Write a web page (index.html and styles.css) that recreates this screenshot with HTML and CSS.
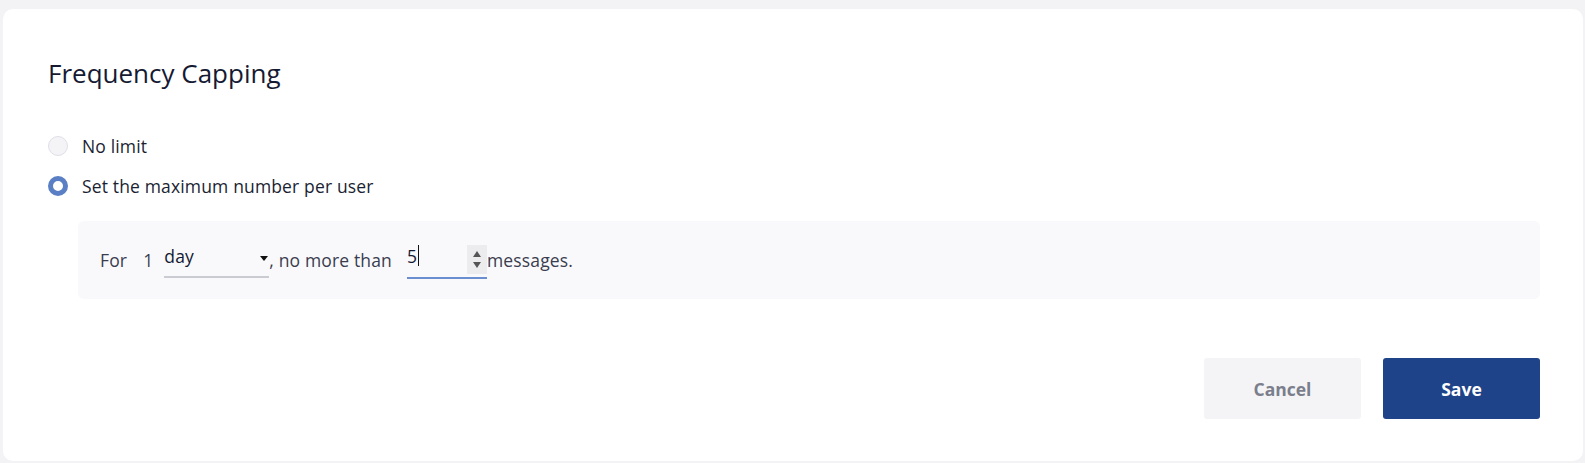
FILE: index.html
```html
<!DOCTYPE html>
<html>
<head>
<meta charset="utf-8">
<link rel="stylesheet" href="styles.css">
</head>
<body>
<div class="card">
  <h2 class="title">Frequency Capping</h2>
  <div class="options">
    <label class="option">
      <span class="radio"></span>
      <span class="opt-text">No limit</span>
    </label>
    <label class="option">
      <span class="radio checked"></span>
      <span class="opt-text">Set the maximum number per user</span>
    </label>
  </div>
  <div class="rule-box">
    <span class="word">For</span>
    <span class="num">1</span>
    <span class="select">
      <span class="select-val">day</span>
      <span class="caret"></span>
    </span>
    <span class="word">, no more than</span>
    <span class="number-input">
      <span class="input-val">5<span class="cursor"></span></span>
      <span class="spinner"><span class="up"></span><span class="down"></span></span>
    </span>
    <span class="word tail">messages.</span>
  </div>
  <div class="actions">
    <button class="btn cancel">Cancel</button>
    <button class="btn save">Save</button>
  </div>
</div>
</body>
</html>
```
FILE: styles.css
```css
html, body {
  margin: 0;
  padding: 0;
}
body {
  background: #f3f3f5;
  padding: 9px 2px 2px 3px;
  font-family: "Open Sans", "Lato", sans-serif;
  color: #1b1f33;
}
.card {
  background: #ffffff;
  border-radius: 10px;
  height: 452px;
  box-sizing: border-box;
  padding: 0 43px 0 45px;
  display: flex;
  flex-direction: column;
}
.title {
  margin: 48px 0 0 0;
  font-size: 26px;
  font-weight: 400;
  line-height: 32px;
  color: #151a33;
}
.options {
  margin-top: 47px;
  display: flex;
  flex-direction: column;
  gap: 20px;
}
.option {
  display: flex;
  align-items: center;
  gap: 14px;
  height: 20px;
  font-size: 17.5px;
  letter-spacing: 0.15px;
  color: #1b1f33;
}
.radio {
  width: 20px;
  height: 20px;
  box-sizing: border-box;
  border-radius: 50%;
  background: #f4f4f7;
  border: 1px solid #dfe0e7;
}
.radio.checked {
  background: #ffffff;
  border: 5px solid #5a7fc4;
}
.rule-box {
  margin: 25px 0 0 30px;
  height: 78px;
  background: #f9f9fb;
  border-radius: 6px;
  display: flex;
  align-items: center;
  padding-left: 22px;
  font-size: 17.5px;
  letter-spacing: 0.15px;
  color: #3a3d4f;
}
.num {
  margin-left: 16px;
  margin-right: 11px;
}
.select {
  width: 105px;
  height: 32px;
  box-sizing: border-box;
  border-bottom: 2px solid #cbcbd3;
  display: flex;
  align-items: flex-start;
  justify-content: space-between;
  position: relative;
  top: 2px;
}
.select-val {
  color: #151a33;
  line-height: 18px;
  margin-top: 1px;
}
.caret {
  width: 0;
  height: 0;
  border-left: 4px solid transparent;
  border-right: 4px solid transparent;
  border-top: 5px solid #111;
  margin-top: 10px;
  margin-right: 1px;
}
.number-input {
  margin-left: 15px;
  width: 80px;
  height: 34px;
  box-sizing: border-box;
  border-bottom: 2px solid #6a8ed0;
  display: flex;
  justify-content: space-between;
  align-items: flex-start;
  position: relative;
  top: 2px;
}
.input-val {
  color: #151a33;
  line-height: 20px;
  margin-top: 0;
  display: flex;
  align-items: center;
}
.cursor {
  display: inline-block;
  width: 1px;
  height: 21px;
  background: #111;
  margin-left: 1px;
}
.spinner {
  width: 20px;
  height: 29px;
  background: #ececef;
  display: flex;
  flex-direction: column;
  align-items: center;
  justify-content: center;
  gap: 5px;
}
.up {
  width: 0; height: 0;
  border-left: 4px solid transparent;
  border-right: 4px solid transparent;
  border-bottom: 6px solid #555;
}
.down {
  width: 0; height: 0;
  border-left: 4px solid transparent;
  border-right: 4px solid transparent;
  border-top: 6px solid #555;
}
.actions {
  margin-top: 59px;
  display: flex;
  justify-content: flex-end;
  gap: 22px;
}
.btn {
  width: 157px;
  height: 61px;
  border: none;
  border-radius: 3px;
  font-family: inherit;
  font-size: 17.5px;
  font-weight: 700;
  cursor: pointer;
}
.cancel {
  background: #f4f4f6;
  color: #7b7e8c;
}
.save {
  background: #1e4388;
  color: #ffffff;
}
```
